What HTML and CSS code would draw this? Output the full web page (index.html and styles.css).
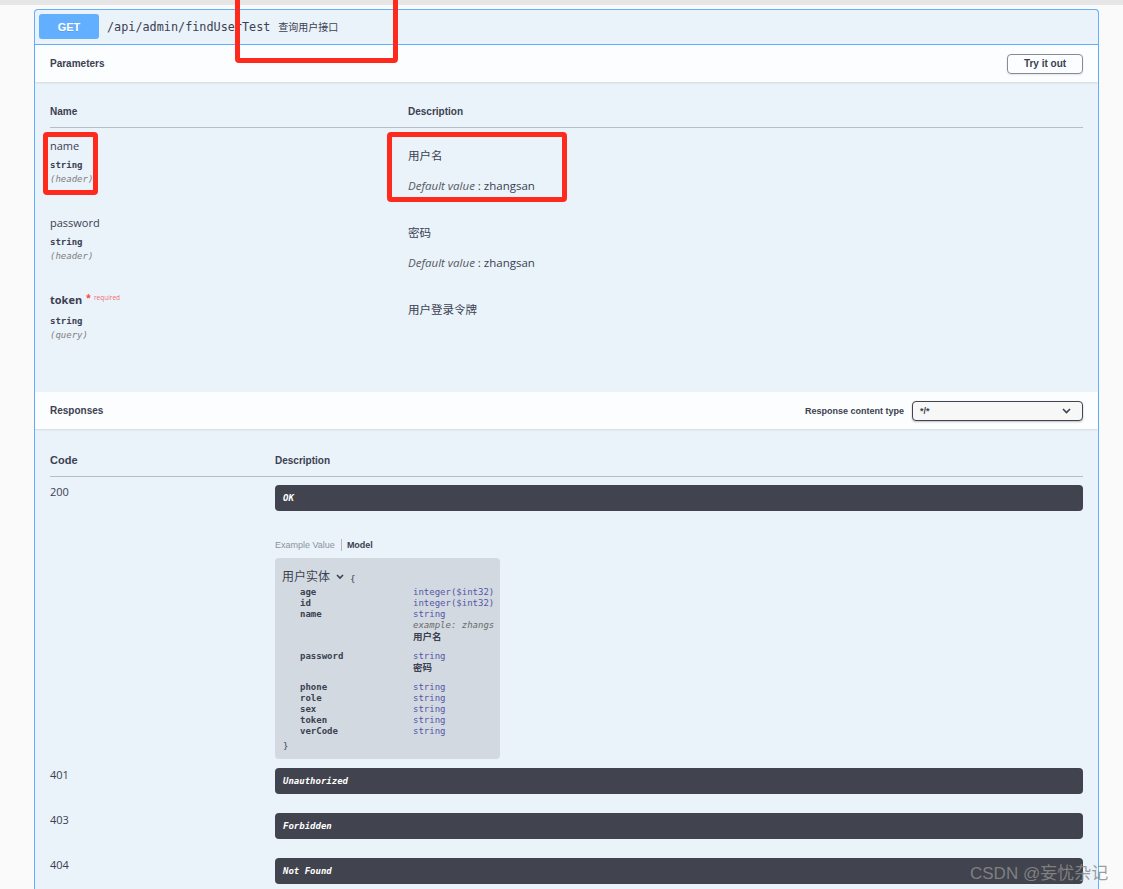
FILE: index.html
```html
<!DOCTYPE html>
<html lang="zh">
<head>
<meta charset="utf-8">
<title>findUserTest</title>
<link rel="stylesheet" href="styles.css">
</head>
<body>
<div class="topbar"></div>
<div class="page">
  <div class="opblock">
    <div class="op-head">
      <span class="method">GET</span>
      <span class="path">/api/admin/findUserTest</span>
      <span class="summary">查询用户接口</span>
    </div>

    <div class="sec-head">
      <h4 class="sec-title">Parameters</h4>
      <button class="try">Try it out</button>
    </div>
    <div class="params">
      <div class="prow phead">
        <div>Name</div>
        <div>Description</div>
      </div>
      <div class="prow">
        <div class="pcell">
          <div class="pname">name</div>
          <div class="ptype">string</div>
          <div class="pin">(header)</div>
        </div>
        <div class="pdesc">
          <p>用户名</p>
          <p><i>Default value</i> : zhangsan</p>
        </div>
      </div>
      <div class="prow">
        <div class="pcell">
          <div class="pname">password</div>
          <div class="ptype">string</div>
          <div class="pin">(header)</div>
        </div>
        <div class="pdesc">
          <p>密码</p>
          <p><i>Default value</i> : zhangsan</p>
        </div>
      </div>
      <div class="prow">
        <div class="pcell">
          <div class="pname pname-req">token <span class="star">*</span><span class="req">required</span></div>
          <div class="ptype">string</div>
          <div class="pin">(query)</div>
        </div>
        <div class="pdesc">
          <p>用户登录令牌</p>
        </div>
      </div>
    </div>

    <div class="sec-head">
      <h4 class="sec-title">Responses</h4>
      <div class="ctype">
        <span class="ctype-label">Response content type</span>
        <div class="select">
          <span>*/*</span>
          <svg width="9" height="6" viewBox="0 0 9 6"><path d="M1 1 L4.5 4.5 L8 1" fill="none" stroke="#3b4151" stroke-width="1.6"/></svg>
        </div>
      </div>
    </div>
    <div class="responses">
      <div class="rrow rhead">
        <div class="rh-code">Code</div>
        <div class="rh-desc">Description</div>
      </div>
      <div class="rrow rrow-ok">
        <div class="rcode">200</div>
        <div>
          <div class="rbar">OK</div>
          <div class="tabs">
            <span class="tab-ex">Example Value</span>
            <span class="tab-model">Model</span>
          </div>
          <div class="model">
            <div class="model-title">
              <span>用户实体</span>
              <svg class="chev" width="8" height="6" viewBox="0 0 8 6"><path d="M1 1 L4 4 L7 1" fill="none" stroke="#3b4151" stroke-width="1.6"/></svg>
              <span class="brace">{</span>
            </div>
            <div class="mgrid">
              <span class="mn">age</span><span class="mt">integer($int32)</span>
              <span class="mn">id</span><span class="mt">integer($int32)</span>
              <span class="mn">name</span><span class="mt">string</span>
              <span></span><span class="mex">example: zhangs</span>
              <span></span><span class="mdesc">用户名</span>
              <span class="mn gp">password</span><span class="mt gp">string</span>
              <span></span><span class="mdesc">密码</span>
              <span class="mn gp">phone</span><span class="mt gp">string</span>
              <span class="mn">role</span><span class="mt">string</span>
              <span class="mn">sex</span><span class="mt">string</span>
              <span class="mn">token</span><span class="mt">string</span>
              <span class="mn">verCode</span><span class="mt">string</span>
            </div>
            <div class="mclose">}</div>
          </div>
        </div>
      </div>
      <div class="rrow">
        <div class="rcode">401</div>
        <div><div class="rbar">Unauthorized</div></div>
      </div>
      <div class="rrow">
        <div class="rcode">403</div>
        <div><div class="rbar">Forbidden</div></div>
      </div>
      <div class="rrow">
        <div class="rcode">404</div>
        <div><div class="rbar">Not Found</div></div>
      </div>
    </div>
  </div>
</div>

<div class="mark mark-1"></div>
<div class="mark mark-2"></div>
<div class="mark mark-3"></div>
<div class="watermark">CSDN @妄忧杂记</div>
</body>
</html>
```

FILE: styles.css
```css
* { box-sizing: border-box; }

body {
  margin: 0;
  height: 889px;
  overflow: hidden;
  position: relative;
  background: #fafafa;
  color: #3b4151;
  font-family: "Open Sans", "Noto Sans CJK SC", sans-serif;
}

.topbar { height: 5px; background: #e6e6e6; }

.page { padding: 4px 0 0 34px; }

.opblock {
  width: 1065px;
  border: 1px solid #61affe;
  border-bottom: none;
  border-radius: 4px 4px 0 0;
  background: rgba(97, 175, 254, 0.1);
}

.op-head {
  display: flex;
  align-items: center;
  padding: 4px 5px 5px 4px;
  border-bottom: 1px solid #61affe;
}

.method {
  width: 60px;
  height: 25px;
  display: flex;
  align-items: center;
  justify-content: center;
  background: #61affe;
  border-radius: 3px;
  color: #fff;
  font: bold 11px "Liberation Sans", sans-serif;
  text-shadow: 0 1px 0 rgba(0, 0, 0, 0.1);
  margin-right: 8px;
}

.path {
  font: 11.8px "DejaVu Sans Mono", monospace;
  color: #3b4151;
}

.summary {
  margin-left: 8px;
  font: 10px "Noto Sans CJK SC", sans-serif;
  color: #3b4151;
}

.sec-head {
  position: relative;
  z-index: 1;
  display: flex;
  align-items: center;
  justify-content: space-between;
  height: 37px;
  padding: 0 15px;
  background: rgba(255, 255, 255, 0.8);
  box-shadow: 0 1px 2px rgba(0, 0, 0, 0.1);
}

.sec-title {
  margin: 0;
  font: bold 10px "Liberation Sans", sans-serif;
  color: #3b4151;
}

.try {
  width: 76px;
  height: 20px;
  padding: 0;
  border: 1px solid #858b95;
  border-radius: 4px;
  background: transparent;
  box-shadow: 0 1px 2px rgba(0, 0, 0, 0.1);
  font: bold 10px "Liberation Sans", sans-serif;
  color: #3b4151;
}

/* parameters */
.params { padding: 23px 15px 41px; }

.prow {
  display: grid;
  grid-template-columns: 358px 1fr;
  padding: 9px 0 10px;
}

.phead {
  padding: 0 0 8px;
  border-bottom: 1px solid rgba(59, 65, 81, 0.3);
  font: bold 10px/14px "Liberation Sans", sans-serif;
}

.pname {
  font-size: 11px;
  line-height: 18px;
  color: #3b4151;
}

.pname-req { font-weight: bold; }

.star {
  color: #f93e3e;
  font-size: 9px;
  position: relative;
  top: -3px;
  margin-left: 1px;
}

.req {
  color: rgba(255, 0, 0, 0.6);
  font-size: 6.5px;
  font-weight: normal;
  position: relative;
  top: -4px;
  margin-left: 3px;
}

.ptype {
  margin-top: 4px;
  font: bold 9px/12px "DejaVu Sans Mono", monospace;
}

.pin {
  margin-top: 2px;
  font: italic 9px/12px "DejaVu Sans Mono", monospace;
  color: #808080;
}

.pdesc { font-size: 11.5px; }

.pdesc p {
  margin: 10px 0 0;
  line-height: 18px;
}

.pdesc p + p { margin-top: 12px; }

.pdesc i { color: #55595f; }

/* responses */
.ctype {
  display: flex;
  align-items: center;
  gap: 8px;
}

.ctype-label {
  font: bold 9px "Liberation Sans", sans-serif;
}

.select {
  width: 171px;
  height: 20px;
  display: flex;
  align-items: center;
  justify-content: space-between;
  padding: 0 11px 0 7px;
  border: 1px solid #41444e;
  border-radius: 4px;
  background: #f7f7f7;
  box-shadow: 0 1px 2px rgba(0, 0, 0, 0.25);
  font: bold 9px "Liberation Sans", sans-serif;
}

.responses { padding: 23px 15px 0; }

.rrow {
  display: grid;
  grid-template-columns: 225px 1fr;
  padding: 8px 0 11px;
}

.rhead {
  align-items: end;
  padding: 0 0 8px;
  border-bottom: 1px solid rgba(59, 65, 81, 0.3);
}

.rh-code { font: bold 11px/16px "Liberation Sans", sans-serif; }
.rh-desc { font: bold 10px/14px "Liberation Sans", sans-serif; }

.rrow-ok { padding-bottom: 1px; }

.rcode {
  font-size: 11px;
  line-height: 14px;
}

.rbar {
  height: 26px;
  padding-left: 8px;
  border-radius: 4px;
  background: #41444e;
  color: #fff;
  font: italic bold 9px/26px "DejaVu Sans Mono", monospace;
}

.tabs {
  margin-top: 27px;
  display: flex;
  align-items: center;
  font: 9px/14px "Liberation Sans", sans-serif;
}

.tab-ex {
  color: #8b93a1;
  padding-right: 6px;
  border-right: 1px solid #b5b9bf;
  line-height: 12px;
}

.tab-model {
  padding-left: 5px;
  font-weight: bold;
  color: #3b4151;
}

.model {
  margin-top: 6px;
  width: 225px;
  padding: 10px 6px 7px 7px;
  border-radius: 4px;
  background: rgba(0, 0, 0, 0.1);
}

.model-title {
  display: flex;
  align-items: center;
  font-size: 12px;
  line-height: 18px;
}

.chev { margin-left: 6px; }

.brace {
  margin-left: 6px;
  margin-top: 4px;
  font: 9px/11px "DejaVu Sans Mono", monospace;
}

.mgrid {
  margin: 1px 0 0 18px;
  display: grid;
  grid-template-columns: 113px 1fr;
  overflow: hidden;
  white-space: nowrap;
  font: 9px/11px "DejaVu Sans Mono", monospace;
}

.mn { font-weight: bold; color: #3b4151; }
.mt { color: #55a; }
.mex { font-style: italic; color: #6b6b6b; }
.mdesc {
  font: bold 9.5px/11px "Noto Sans CJK SC", sans-serif;
  color: #3b4151;
}

.gp { margin-top: 9px; }

.mclose {
  margin: 4px 0 0 1px;
  font: 9px/11px "DejaVu Sans Mono", monospace;
}

/* annotations drawn over the screenshot */
.mark {
  position: absolute;
  z-index: 5;
  border: 5px solid #ff2a1e;
  border-radius: 4px;
}

.mark-1 { left: 235px; top: -6px; width: 163px; height: 69px; }
.mark-2 { left: 43px; top: 132px; width: 55px; height: 63px; }
.mark-3 { left: 387px; top: 132px; width: 180px; height: 70px; }

.watermark {
  position: absolute;
  z-index: 5;
  left: 970px;
  top: 859px;
  font: 17px "Liberation Sans", "Noto Sans CJK SC", sans-serif;
  color: rgba(140, 140, 140, 0.85);
  white-space: nowrap;
}
```
